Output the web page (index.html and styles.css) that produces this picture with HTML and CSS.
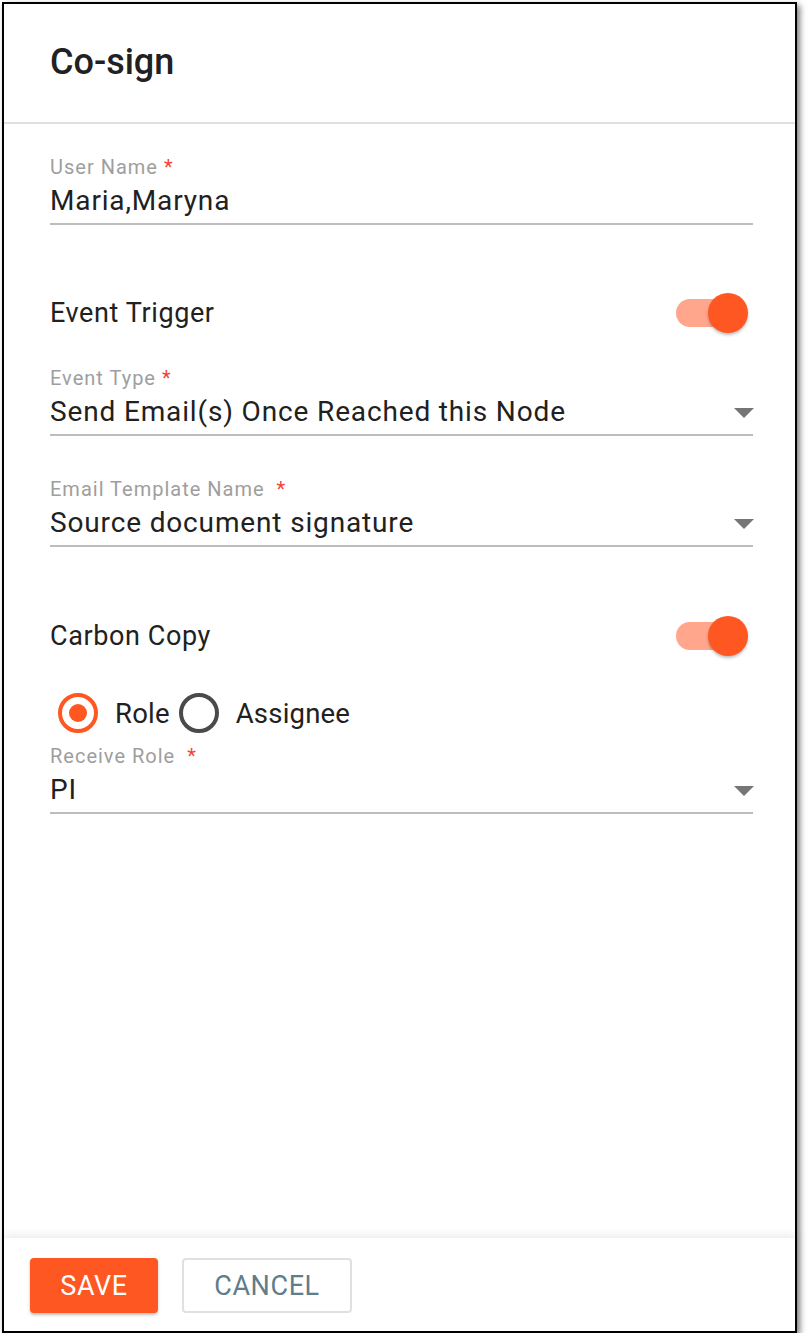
FILE: index.html
```html
<!DOCTYPE html>
<html lang="en">
<head>
<meta charset="utf-8">
<title>Co-sign</title>
<link rel="stylesheet" href="styles.css">
</head>
<body>
<div class="frame">
  <header class="header">
    <h1 class="title">Co-sign</h1>
  </header>
  <main class="content">
    <div class="field field-first">
      <div class="label">User Name <span class="req">*</span></div>
      <div class="value">Maria,Maryna</div>
    </div>

    <div class="toggle-row row-trigger">
      <span class="toggle-label">Event Trigger</span>
      <span class="switch"><span class="track"></span><span class="thumb"></span></span>
    </div>

    <div class="field field-select">
      <div class="label">Event Type <span class="req">*</span></div>
      <div class="value">Send Email(s) Once Reached this Node<span class="arrow"></span></div>
    </div>

    <div class="field field-select field-gap">
      <div class="label">Email Template Name <span class="req wide">*</span></div>
      <div class="value">Source document signature<span class="arrow"></span></div>
    </div>

    <div class="toggle-row row-cc">
      <span class="toggle-label">Carbon Copy</span>
      <span class="switch"><span class="track"></span><span class="thumb"></span></span>
    </div>

    <div class="radio-row">
      <span class="radio checked"><span class="dot"></span></span>
      <span class="radio-text">Role</span>
      <span class="radio"></span>
      <span class="radio-text">Assignee</span>
    </div>

    <div class="field field-select field-role">
      <div class="label">Receive Role <span class="req wide">*</span></div>
      <div class="value">PI<span class="arrow"></span></div>
    </div>
  </main>
  <footer class="footer">
    <button class="btn btn-save">SAVE</button>
    <button class="btn btn-cancel">CANCEL</button>
  </footer>
</div>
</body>
</html>
```
FILE: styles.css
```css
* { box-sizing: border-box; }
html, body { margin: 0; padding: 0; background: #fff; }
body {
  font-family: Roboto, "Liberation Sans", Arial, sans-serif;
  color: #212121;
}
.frame {
  margin: 2px 0 0 2px;
  width: 795px;
  height: 1331px;
  border: 2px solid #000;
  box-shadow: 3px 3px 6px rgba(0,0,0,0.5);
  display: flex;
  flex-direction: column;
  background: #fff;
}
.header {
  height: 120px;
  border-bottom: 2px solid #e0e0e0;
  padding-left: 46px;
  display: flex;
  align-items: center;
  flex-shrink: 0;
}
.title {
  margin: 0;
  font-size: 36px;
  font-weight: 500;
  color: #212121;
  line-height: 1;
  padding-bottom: 2px;
}
.content {
  flex: 1;
  padding: 31px 42px 0 46px;
}
.field { display: flex; flex-direction: column; }
.label {
  font-size: 20px;
  line-height: 24px;
  color: #9e9e9e;
  letter-spacing: 1px;
}
.req { color: #f44336; }
.req.wide { margin-left: 6px; }
.value {
  position: relative;
  font-size: 28px;
  line-height: 44px;
  letter-spacing: 0.85px;
  color: #212121;
  border-bottom: 2px solid #bdbdbd;
}
.arrow {
  position: absolute;
  right: -1px;
  top: 18px;
  width: 0;
  height: 0;
  border-left: 10px solid transparent;
  border-right: 10px solid transparent;
  border-top: 10px solid #757575;
}
.toggle-row {
  display: flex;
  align-items: center;
  justify-content: space-between;
  height: 56px;
}
.row-trigger { margin-top: 60px; }
.field-select { margin-top: 25px; }
.field-gap { margin-top: 41px; }
.row-cc { margin-top: 61px; }
.toggle-label {
  font-size: 27px;
  letter-spacing: 0.6px;
  color: #212121;
}
.switch {
  position: relative;
  width: 72px;
  height: 40px;
  margin-right: 5px;
  display: flex;
  align-items: center;
}
.track {
  width: 66px;
  height: 28px;
  border-radius: 14px;
  background: #ffa68c;
}
.thumb {
  position: absolute;
  right: 0;
  top: 0;
  width: 40px;
  height: 40px;
  border-radius: 50%;
  background: #ff5722;
  box-shadow: 0 2px 3px rgba(0,0,0,0.25);
}
.radio-row {
  display: flex;
  align-items: center;
  height: 48px;
  margin-top: 25px;
  padding-left: 8px;
}
.radio {
  width: 40px;
  height: 40px;
  border-radius: 50%;
  border: 4px solid #4a4a4a;
  display: flex;
  align-items: center;
  justify-content: center;
  flex-shrink: 0;
}
.radio.checked { border-color: #ff5722; }
.dot {
  width: 18px;
  height: 18px;
  border-radius: 50%;
  background: #ff5722;
}
.radio-text {
  font-size: 27.5px;
  letter-spacing: 0.2px;
  color: #212121;
  margin-left: 17px;
  margin-right: 9px;
}
.field-role { margin-top: 7px; }
.footer {
  height: 93px;
  flex-shrink: 0;
  display: flex;
  align-items: flex-start;
  gap: 24px;
  padding: 20px 0 0 26px;
  box-shadow: 0 -3px 8px rgba(0,0,0,0.08);
  position: relative;
}
.btn {
  height: 55px;
  border-radius: 4px;
  font-family: Roboto, "Liberation Sans", Arial, sans-serif;
  font-size: 27px;
  font-weight: 400;
  letter-spacing: 0.6px;
  cursor: pointer;
}
.btn-save {
  width: 128px;
  background: #ff5722;
  color: #fff;
  border: none;
  box-shadow: 0 2px 3px rgba(0,0,0,0.25);
}
.btn-cancel {
  width: 170px;
  background: #fff;
  color: #607d8b;
  border: 2px solid #e0e0e0;
}
```
